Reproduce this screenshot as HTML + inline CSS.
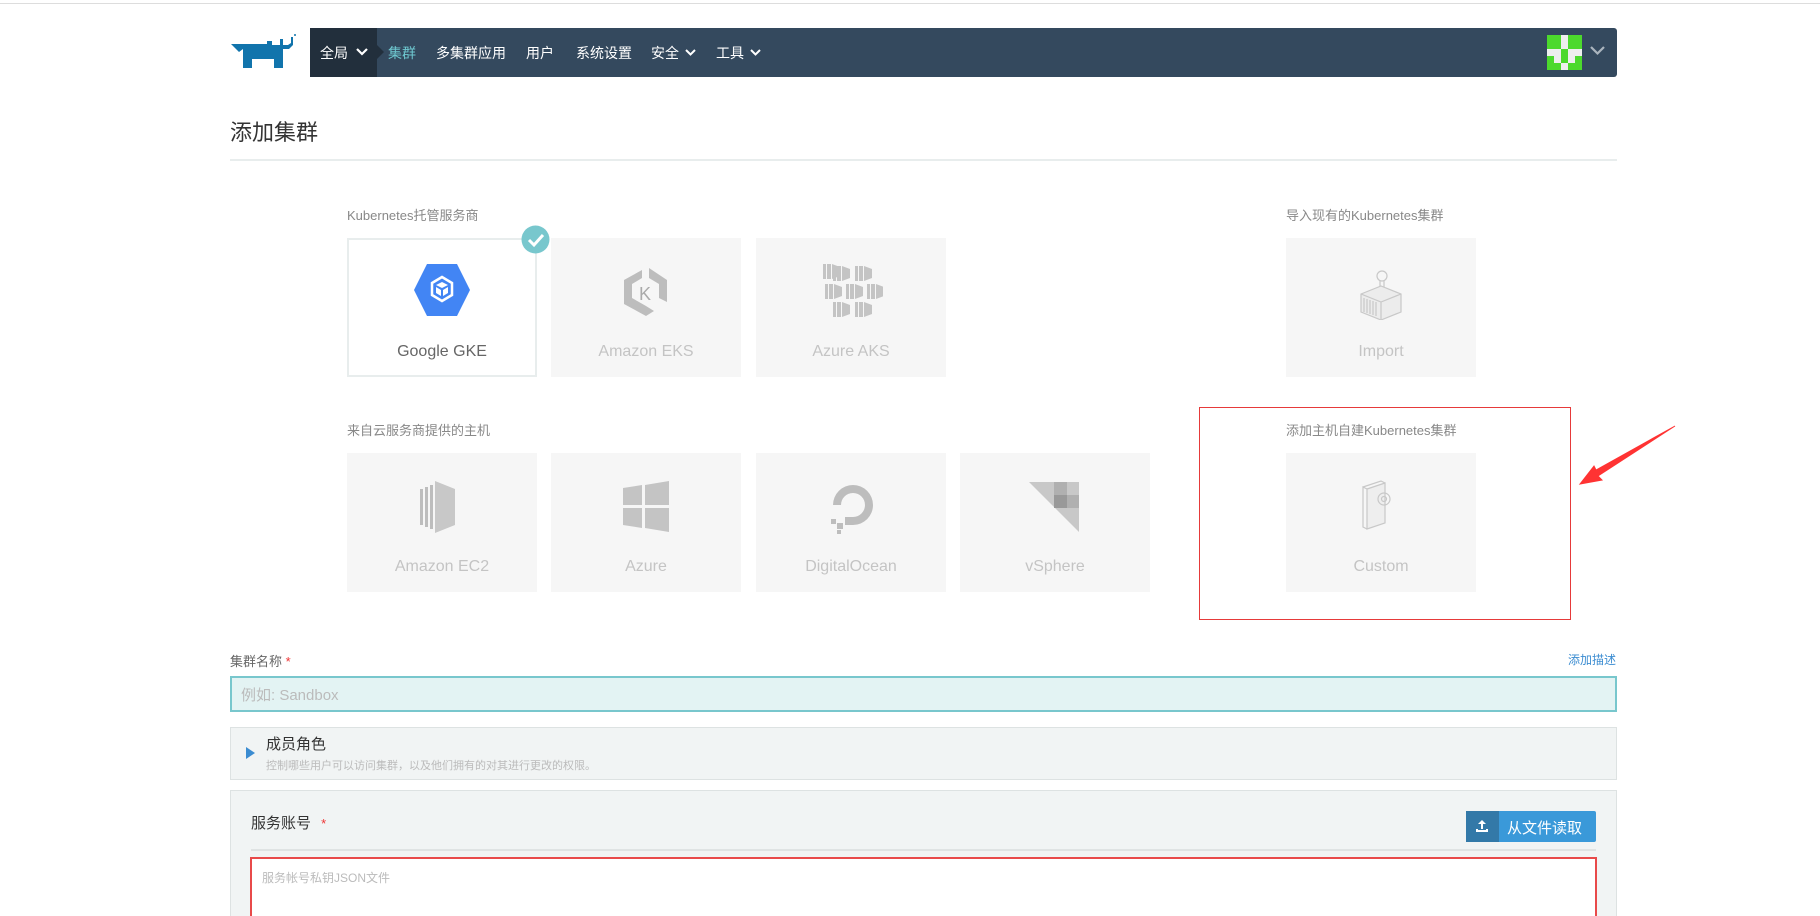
<!DOCTYPE html>
<html><head><meta charset="utf-8"><style>
*{margin:0;padding:0;box-sizing:border-box}
html,body{width:1820px;height:916px;overflow:hidden}
body{background:#fff;position:relative;font-family:"Liberation Sans","Noto Sans CJK SC",sans-serif;color:#333}
.a{position:absolute}
.nav{left:310px;top:28px;width:1307px;height:49px;background:#34495e;border-radius:0 3px 3px 0}
.nav span{position:absolute;top:15px;font-size:14px;color:#fff}
.lbl{font-size:13px;color:#888}
.card{position:absolute;width:190px;height:139px;background:#f6f6f6}
.card .t{position:absolute;left:0;right:0;top:105px;text-align:center;font-size:16px;color:#c4c4c4}
.card svg{position:absolute;left:67px;top:26px}
</style></head><body>
<div class="a" style="left:0;top:3px;width:1820px;height:1px;background:#ddd"></div>
<svg class="a" style="left:230px;top:33px" width="68" height="36" viewBox="0 0 68 36"><path d="M1 11h36v-3h5v4h8v-6h3v6h5l3-2v-6h2v8l-4 4h-6v19h-9v-9h-22v9h-9v-19l-4 3z" fill="#1174ac"/><circle cx="65" cy="2" r="1" fill="#1174ac"/></svg>
<div class="a nav"></div>
<div class="a" style="left:310px;top:28px;width:67px;height:49px;background:#222f3c"></div>
<svg class="a" style="left:377px;top:45px" width="8" height="14"><path d="M0 0l7 7-7 7z" fill="#222f3c"/></svg>
<div class="nav a" style="background:none">
<span style="left:10px">全局</span>
<svg class="a" style="left:46px;top:20px" width="12" height="9"><path d="M1 1l5 5 5-5" stroke="#fff" stroke-width="2.2" fill="none"/></svg>
<span style="left:78px;color:#6ec8d0">集群</span>
<span style="left:126px">多集群应用</span>
<span style="left:216px">用户</span>
<span style="left:266px">系统设置</span>
<span style="left:341px">安全</span>
<svg class="a" style="left:375px;top:21px" width="11" height="8"><path d="M1 1l4.5 4.5 4.5-4.5" stroke="#fff" stroke-width="2" fill="none"/></svg>
<span style="left:406px">工具</span>
<svg class="a" style="left:440px;top:21px" width="11" height="8"><path d="M1 1l4.5 4.5 4.5-4.5" stroke="#fff" stroke-width="2" fill="none"/></svg>
</div>
<svg class="a" style="left:1547px;top:35px" width="35" height="35" viewBox="0 0 5 5"><rect width="5" height="5" fill="#4cd92d"/><rect x="2" y="0" width="1" height="2" fill="#eee"/><rect x="0" y="2" width="2" height="1" fill="#eee"/><rect x="3" y="2" width="2" height="1" fill="#eee"/><rect x="1" y="3" width="1" height="1" fill="#eee"/><rect x="3" y="3" width="1" height="1" fill="#eee"/><rect x="2" y="4" width="1" height="1" fill="#eee"/></svg>
<svg class="a" style="left:1590px;top:46px" width="15" height="10"><path d="M1 1l6.5 6.5 6.5-6.5" stroke="#aab4be" stroke-width="2.2" fill="none"/></svg>

<div class="a" style="left:230px;top:115px;font-size:22px;color:#333">添加集群</div>
<div class="a" style="left:230px;top:159px;width:1387px;height:2px;background:#e8eded"></div>

<div class="a lbl" style="left:347px;top:205px">Kubernetes托管服务商</div>
<div class="a lbl" style="left:1286px;top:205px">导入现有的Kubernetes集群</div>
<div class="a lbl" style="left:347px;top:420px">来自云服务商提供的主机</div>
<div class="a lbl" style="left:1286px;top:420px">添加主机自建Kubernetes集群</div>

<div class="card" style="left:347px;top:238px;background:#fff;border:2px solid #e8eded">
<svg style="left:64px;top:23px" width="58" height="54" viewBox="0 0 58 54"><path d="M14 1h30l13 26-13 26H14L1 27z" fill="#4285f4"/><path d="M29 14l10 6v12l-10 6-10-6V20z" fill="none" stroke="#fff" stroke-width="2.5"/><path d="M23 22l6 3 6-3-6-3zM23 24v6l5 3v-6zM35 24v6l-5 3v-6z" fill="#fff"/></svg>
<div class="t" style="top:103px;color:#666">Google GKE</div></div>
<svg class="a" style="left:521px;top:225px" width="29" height="29"><circle cx="14.5" cy="14.5" r="14" fill="#78c7cd"/><path d="M8 15l5 5 9-10" stroke="#fff" stroke-width="3" fill="none"/></svg>
<div class="card" style="left:551px;top:238px"><svg width="56" height="56" viewBox="0 0 56 56"><path d="M24 6L6 16v24l22 12 8-5-8-5-14-8V20l10-6z" fill="#bdbdbd"/><path d="M31 4v10l10 6v14l8 4V16z" fill="#bdbdbd"/><text x="21" y="36" font-size="18" fill="#aaa" font-family="Liberation Sans">K</text></svg><div class="t">Amazon EKS</div></div>
<div class="card" style="left:756px;top:238px"><svg width="60" height="56" viewBox="0 0 60 56" fill="#c4c4c4"><g id="c"><rect x="0" y="0" width="3" height="15"/><rect x="4" y="0" width="4" height="15"/><path d="M9 0l8 3v9l-8 3z"/></g><use href="#c" x="10" y="2"/><use href="#c" x="32" y="2"/><use href="#c" x="2" y="20"/><use href="#c" x="23" y="20"/><use href="#c" x="44" y="20"/><use href="#c" x="10" y="38"/><use href="#c" x="32" y="38"/></svg><div class="t">Azure AKS</div></div>
<div class="card" style="left:1286px;top:238px"><svg width="56" height="56" viewBox="0 0 56 56" fill="none" stroke="#c8c8c8" stroke-width="1.2"><circle cx="29" cy="12" r="5"/><path d="M27 16v14M31 16v14"/><path d="M8 30l20-8 20 8v18l-20 8-20-8z" fill="#ececec"/><path d="M8 30l20 8 20-8M28 38v18"/><path d="M11 34v14M14 35v14M17 36v14M20 37v14M23 38v14"/></svg><div class="t">Import</div></div>

<div class="card" style="left:347px;top:453px"><svg width="56" height="56" viewBox="0 0 56 56" fill="#bdbdbd"><rect x="6" y="10" width="3" height="36"/><rect x="11" y="8" width="3" height="40"/><rect x="16" y="6" width="3" height="44"/><path d="M21 2l20 8v36l-20 8z" fill="#c8c8c8"/></svg><div class="t">Amazon EC2</div></div>
<div class="card" style="left:551px;top:453px"><svg width="56" height="56" viewBox="0 0 56 56" fill="#c4c4c4"><path d="M5 9l19-3v20H5zM27 6l24-4v24H27zM5 29h19v20L5 46zM27 29h24v24l-24-4z"/></svg><div class="t">Azure</div></div>
<div class="card" style="left:756px;top:453px"><svg width="56" height="56" viewBox="0 0 56 56"><path d="M10 26A20 20 0 1 1 30 46V38A12 12 0 1 0 18 26z" fill="#bdbdbd"/><rect x="22" y="38" width="8" height="8" fill="#bdbdbd"/><rect x="14" y="44" width="6" height="6" fill="#bdbdbd"/><rect x="8" y="40" width="5" height="5" fill="#bdbdbd"/><rect x="14" y="51" width="4" height="4" fill="#bdbdbd"/></svg><div class="t">DigitalOcean</div></div>
<div class="card" style="left:960px;top:453px"><svg width="56" height="56" viewBox="0 0 56 56"><path d="M2 3h50v50z" fill="#c8c8c8"/><path d="M27 3h13v13h-13zM40 16h12v13H40z" fill="#b0b0b0"/><path d="M27 16h13v13H27z" fill="#999"/></svg><div class="t">vSphere</div></div>
<div class="card" style="left:1286px;top:453px"><svg width="56" height="56" viewBox="0 0 56 56" fill="none" stroke="#c8c8c8" stroke-width="1.2"><path d="M14 10l18-6v40l-18 6z" fill="#eee"/><path d="M14 10l-4-2v40l4 2M10 8l18-6 4 2"/><circle cx="31" cy="20" r="6"/><circle cx="31" cy="20" r="2.5"/></svg><div class="t">Custom</div></div>

<div class="a" style="left:1199px;top:407px;width:372px;height:213px;border:1px solid #e63a3a"></div>
<svg class="a" style="left:1575px;top:420px" width="105" height="66"><path d="M100 6L21 50l-2-4-14 18 22-4-4-4z" fill="#f33" stroke="#f33" stroke-width="1"/></svg>

<div class="a" style="left:230px;top:651px;font-size:13px;color:#666">集群名称 <span style="color:#e33">*</span></div>
<div class="a" style="left:1568px;top:651px;font-size:12px;color:#3b8cd1">添加描述</div>
<div class="a" style="left:230px;top:676px;width:1387px;height:36px;background:#e3f3f3;border:2px solid #78c7cd"></div>
<div class="a" style="left:241px;top:684px;font-size:15px;color:#bbb">例如: Sandbox</div>

<div class="a" style="left:230px;top:727px;width:1387px;height:53px;background:#f1f4f4;border:1px solid #dde2e2"></div>
<svg class="a" style="left:246px;top:747px" width="10" height="12"><path d="M0 0l9 6-9 6z" fill="#3b8cd1"/></svg>
<div class="a" style="left:266px;top:733px;font-size:15px;color:#333">成员角色</div>
<div class="a" style="left:266px;top:757px;font-size:11px;color:#bbb">控制哪些用户可以访问集群，以及他们拥有的对其进行更改的权限。</div>

<div class="a" style="left:230px;top:790px;width:1387px;height:126px;background:#f1f4f4;border:1px solid #dde2e2;border-bottom:none"></div>
<div class="a" style="left:251px;top:812px;font-size:15px;color:#333">服务账号 <span style="color:#e33;margin-left:6px;font-size:13px">*</span></div>
<div class="a" style="left:251px;top:849px;width:1345px;height:2px;background:#dfe3e3"></div>
<div class="a" style="left:1466px;top:811px;width:130px;height:31px;background:#3a99d9;border-radius:2px"></div>
<div class="a" style="left:1466px;top:811px;width:33px;height:31px;background:#3379a8"></div>
<svg class="a" style="left:1475px;top:819px" width="14" height="14"><path d="M7 1l-4 4h3v5h2V5h3zM1 10v3h12v-3h-2v1H3v-1z" fill="#fff"/></svg>
<div class="a" style="left:1507px;top:817px;font-size:15px;color:#fff">从文件读取</div>
<div class="a" style="left:250px;top:857px;width:1347px;height:59px;background:#fff;border:2px solid #e84a4a;border-bottom:none"></div>
<div class="a" style="left:262px;top:869px;font-size:12px;color:#bbb">服务帐号私钥JSON文件</div>
</body></html>
